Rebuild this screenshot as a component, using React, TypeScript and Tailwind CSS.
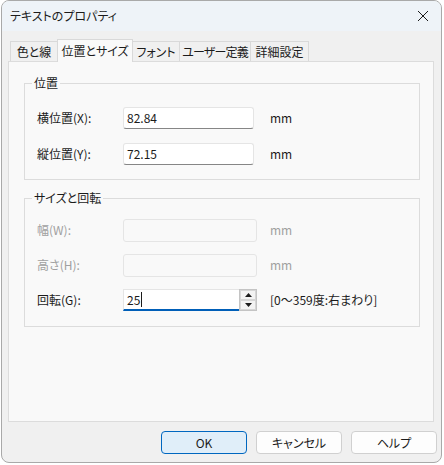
import React from "react";

const font = "font-['Noto_Sans_CJK_JP',sans-serif] [font-feature-settings:'palt']";

const tabs = [
  { label: "色と線", w: "w-[48px]" },
  { label: "位置とサイズ", w: "w-[76px]", active: true },
  { label: "フォント", w: "w-[48px]" },
  { label: "ユーザー定義", w: "w-[72px] tracking-[-0.8px]" },
  { label: "詳細設定", w: "w-[59px]" },
];

const Group = ({ title, children, className }: { title: string; children: React.ReactNode; className?: string }) => (
  <div className={`relative border border-[#dcdcdc] ${className ?? ""}`}>
    <span className="absolute -top-[9px] left-[7px] bg-[#f9f9f9] px-[2px] text-[12px] leading-[16px] text-[#1b1b1b]">
      {title}
    </span>
    {children}
  </div>
);

const Row = ({ label, disabled, children, unit }: { label: string; disabled?: boolean; children: React.ReactNode; unit: string }) => (
  <div className="flex h-[22px] items-center">
    <span className={`w-[86px] text-[12px] leading-[16px] ${disabled ? "text-[#a0a0a0]" : "text-[#1b1b1b]"}`}>{label}</span>
    {children}
    <span className={`text-[12px] leading-[16px] ${disabled ? "text-[#a0a0a0]" : "text-[#1b1b1b]"}`}>{unit}</span>
  </div>
);

const TextBox = ({ value }: { value: string }) => (
  <div className="mr-[16px] flex h-[22px] w-[131px] items-center rounded-[3px] border border-[#e5e5e5] border-b-[#868686] bg-white pl-[3px] text-[12px] text-[#1b1b1b]">
    {value}
  </div>
);

const Disabled = () => (
  <div className="mr-[13px] h-[23px] w-[134px] rounded-[3px] border border-[#e5e5e5] bg-[#f9f9f9]" />
);

const Arrow = ({ up }: { up?: boolean }) => (
  <svg width="7" height="4" viewBox="0 0 7 4">
    <path d={up ? "M0 4 L3.5 0 L7 4 Z" : "M0 0 L3.5 4 L7 0 Z"} fill="#1b1b1b" />
  </svg>
);

const Button = ({ label, primary }: { label: string; primary?: boolean }) => (
  <div
    className={`flex h-[23px] w-[86px] items-center justify-center rounded-[4px] border text-[12px] text-[#1b1b1b] ${
      primary ? "border-[#0067c0] bg-[#e0eef9]" : "border-[#d0d0d0] bg-[#fdfdfd]"
    }`}
  >
    {label}
  </div>
);

export default function App() {
  return (
    <div className={`h-[465px] w-[444px] bg-white ${font}`}>
      <div className="ml-[1px] flex h-[463px] w-[441px] flex-col overflow-hidden rounded-[8px] border border-[#a9a9a9] bg-[#f0f0f0]">
        {/* title bar */}
        <div className="flex h-[30px] items-center justify-between bg-[#eef3f8] pl-[8px] pr-[8px]">
          <span className="text-[12px] leading-[16px] text-[#1b1b1b]">テキストのプロパティ</span>
          <svg width="12" height="12" viewBox="0 0 12 12" className="mr-[4px]">
            <path d="M1 1 L11 11 M11 1 L1 11" stroke="#1b1b1b" strokeWidth="1" />
          </svg>
        </div>

        {/* tabs */}
        <div className="mt-[8px] flex h-[22px] items-end pl-[8px]">
          {tabs.map((t, i) =>
            t.active ? (
              <div
                key={t.label}
                className={`relative z-10 -mb-px flex h-[23px] ${t.w} ${i > 0 ? "-ml-px" : ""} items-center justify-center whitespace-nowrap border border-b-0 border-[#d9d9d9] bg-[#f9f9f9] text-[12px] text-[#1b1b1b]`}
              >
                {t.label}
              </div>
            ) : (
              <div
                key={t.label}
                className={`flex h-[20px] ${t.w} ${i > 0 ? "-ml-px" : ""} items-center justify-center whitespace-nowrap border border-b-0 border-[#d9d9d9] bg-[#f0f0f0] pt-[1px] text-[12px] text-[#1b1b1b]`}
              >
                {t.label}
              </div>
            )
          )}
        </div>

        {/* panel */}
        <div className="ml-[6px] h-[361px] w-[426px] border border-[#dcdcdc] bg-[#f9f9f9] pl-[15px] pt-[21px]">
          <Group title="位置" className="w-[396px] pb-[14px] pl-[12px] pt-[23px]">
            <div className="flex flex-col gap-[14px]">
              <Row label="横位置(X):" unit="mm">
                <TextBox value="82.84" />
              </Row>
              <Row label="縦位置(Y):" unit="mm">
                <TextBox value="72.15" />
              </Row>
            </div>
          </Group>

          <Group title="サイズと回転" className="mt-[18px] w-[396px] pb-[15px] pl-[12px] pt-[20px]">
            <div className="flex flex-col">
              <Row label="幅(W):" unit="mm" disabled>
                <Disabled />
              </Row>
              <div className="mt-[13px]">
                <Row label="高さ(H):" unit="mm" disabled>
                  <Disabled />
                </Row>
              </div>
              <div className="mt-[13px]">
                <Row label="回転(G):" unit="[0〜359度:右まわり]">
                  <div className="mr-[13px] flex h-[22px] w-[134px]">
                    <div className="flex h-[22px] flex-1 items-center border border-r-0 border-[#e5e5e5] border-b-2 border-b-[#005fb8] bg-white pl-[3px] text-[12px] text-[#1b1b1b]">
                      25<span className="ml-px inline-block h-[15px] w-px bg-[#1b1b1b]" />
                    </div>
                    <div className="flex w-[18px] flex-col border border-[#c4c4c4] bg-white">
                      <div className="flex flex-1 items-center justify-center border border-[#d6d6d6] bg-[#f3f3f3]">
                        <Arrow up />
                      </div>
                      <div className="flex flex-1 items-center justify-center border border-[#d6d6d6] bg-[#f3f3f3]">
                        <Arrow />
                      </div>
                    </div>
                  </div>
                </Row>
              </div>
            </div>
          </Group>
        </div>

        {/* buttons */}
        <div className="mt-[9px] flex justify-end gap-[9px] pr-[4px]">
          <Button label="OK" primary />
          <Button label="キャンセル" />
          <Button label="ヘルプ" />
        </div>
      </div>
    </div>
  );
}
